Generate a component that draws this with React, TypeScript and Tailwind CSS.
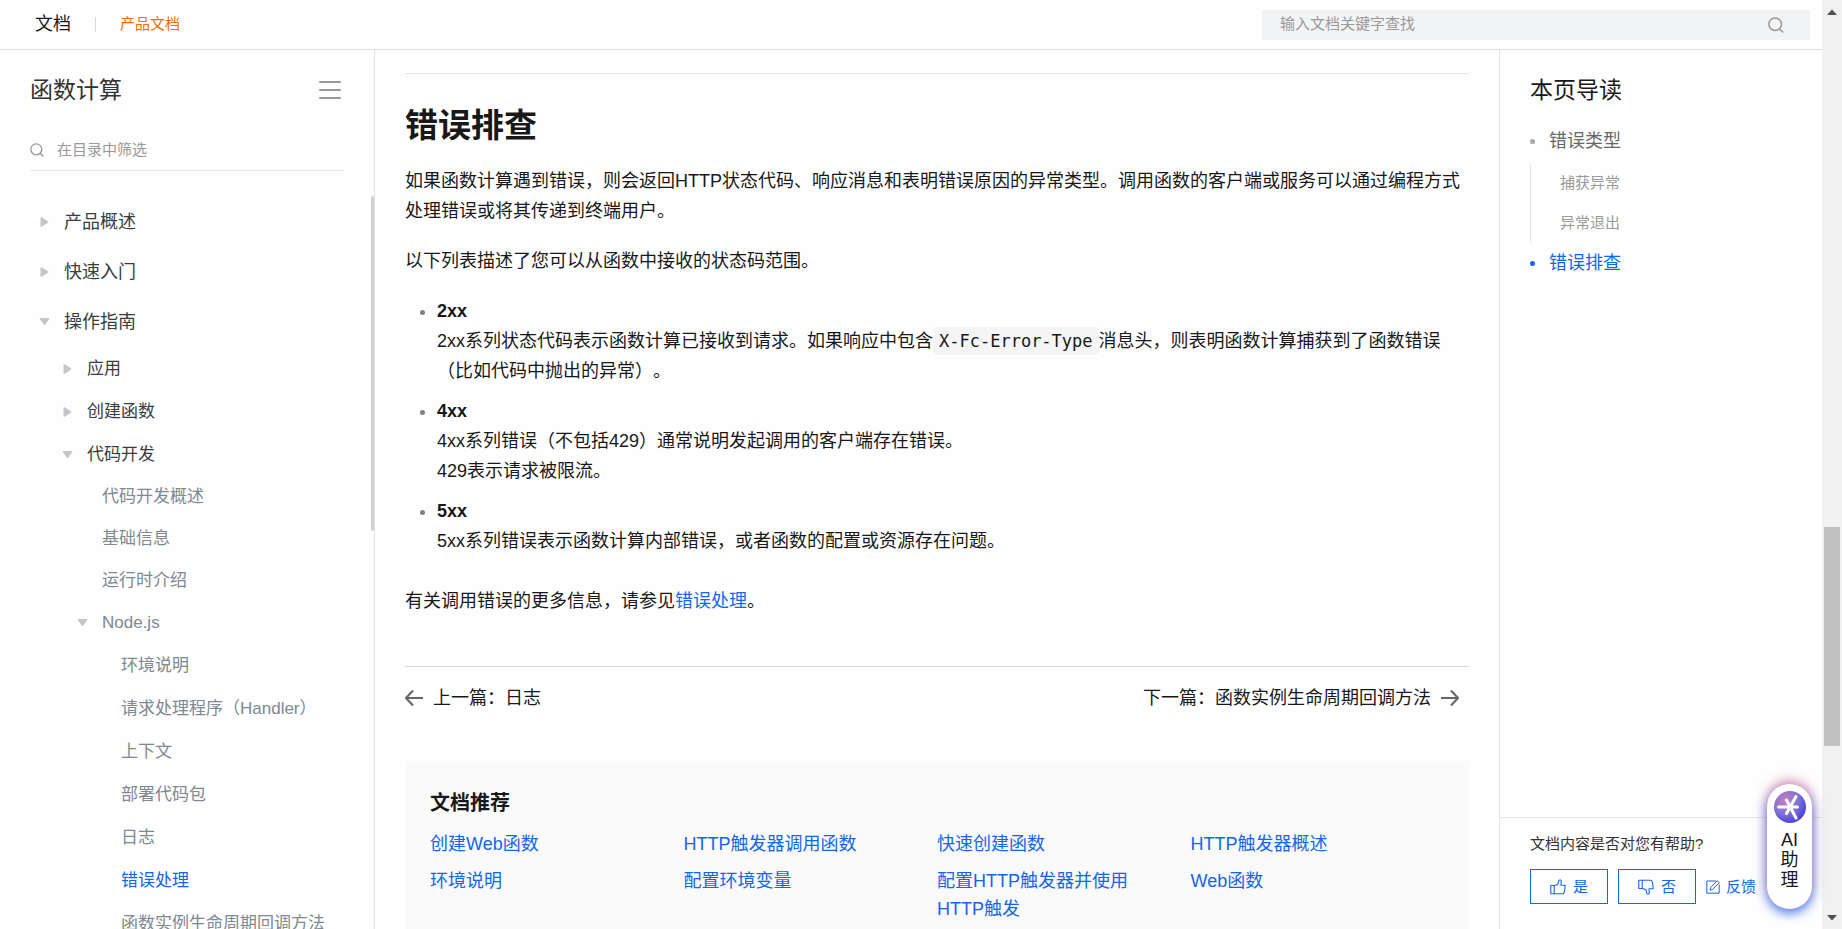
import type { ReactNode } from "react";

type TreeItem = {
  label: string;
  level: 1 | 2 | 3 | 4;
  state?: "open" | "closed";
  active?: boolean;
};

const tree: TreeItem[] = [
  { label: "产品概述", level: 1, state: "closed" },
  { label: "快速入门", level: 1, state: "closed" },
  { label: "操作指南", level: 1, state: "open" },
  { label: "应用", level: 2, state: "closed" },
  { label: "创建函数", level: 2, state: "closed" },
  { label: "代码开发", level: 2, state: "open" },
  { label: "代码开发概述", level: 3 },
  { label: "基础信息", level: 3 },
  { label: "运行时介绍", level: 3 },
  { label: "Node.js", level: 3, state: "open" },
  { label: "环境说明", level: 4 },
  { label: "请求处理程序（Handler）", level: 4 },
  { label: "上下文", level: 4 },
  { label: "部署代码包", level: 4 },
  { label: "日志", level: 4 },
  { label: "错误处理", level: 4, active: true },
  { label: "函数实例生命周期回调方法", level: 4 },
];

const levelStyles = {
  1: "h-[50px] pl-[38px] text-[18px] text-[#373d41]",
  2: "h-[43px] pl-[61px] text-[17px] text-[#373d41]",
  3: "h-[42px] pl-[76px] text-[17px] text-[#808890]",
  4: "h-[43px] pl-[95px] text-[17px] text-[#808890]",
};

const recommended = [
  "创建Web函数",
  "HTTP触发器调用函数",
  "快速创建函数",
  "HTTP触发器概述",
  "环境说明",
  "配置环境变量",
  "配置HTTP触发器并使用HTTP触发",
  "Web函数",
];

function SearchIcon({ className }: { className: string }) {
  return (
    <svg className={className} viewBox="0 0 16 16" fill="none" stroke="currentColor" strokeWidth="1.5">
      <circle cx="7.200" cy="7.200" r="6.300" />
      <path d="M11.500 11.700l3.600 3.800" />
    </svg>
  );
}

function Caret({ open }: { open: boolean }) {
  return (
    <svg className="h-3 w-3" viewBox="0 0 12 12" fill="#c4c6c9">
      {open ? (
        <path d="M2.500 2h8q1.200.2.500 1.300L7.500 8.200q-1 1-2 0L2 3.300q-.6-1.100.5-1.300z" />
      ) : (
        <path d="M2.500 2q.1-1.200 1.300-.7L9.800 5.200q1.100.8 0 1.600L3.800 10.700q-1.200.5-1.300-.7z" />
      )}
    </svg>
  );
}

function ThumbIcon({ down }: { down?: boolean }) {
  return (
    <svg
      className={down ? "h-4 w-4 rotate-180 -scale-x-100" : "h-4 w-4"}
      viewBox="0 0 16 16"
      fill="none"
      stroke="currentColor"
      strokeWidth="1.1"
      strokeLinejoin="round"
    >
      <path d="M.8 6.500h3.400v8.300H.8z" />
      <path d="M4.200 6.800 7.800 5.200 9 1.200q1.800-.8 2.300 1.200L11 6.300h4.200l-.7 6.200q-.3 2.300-2 2.300H4.200" />
    </svg>
  );
}

function EditIcon() {
  return (
    <svg className="h-[14px] w-[14px]" viewBox="0 0 14 14" fill="none" stroke="currentColor" strokeWidth="1">
      <path d="M10 1H.8v12.200h12.400V4.500" />
      <path d="M4 10.200l.6-2.700L11.300.8l2 1.900-6.700 6.800z" />
    </svg>
  );
}

function ArrowIcon({ right }: { right?: boolean }) {
  return (
    <svg
      className={right ? "h-[18px] w-[18px]" : "h-[18px] w-[18px] rotate-180"}
      viewBox="0 0 18 18"
      fill="none"
      stroke="#666"
      strokeWidth="2"
    >
      <path d="M0 9h16.500M10 1.500 17 9l-7 7.500" />
    </svg>
  );
}

function Header() {
  return (
    <header className="flex h-[50px] shrink-0 items-center border-b border-[#e0e0e0] pr-3 pl-[35px]">
      <a href="#" className="text-[18px] text-[#181818]">文档</a>
      <span className="ml-6 h-[15px] w-px bg-[#d8d8d8]" />
      <a href="#" className="ml-6 text-[15px] text-[#ff6a00]">产品文档</a>
      <label className="ml-auto flex h-[30px] w-[548px] items-center bg-[#f2f3f5] pr-[26px] pl-[18px] text-[#999]">
        <input
          type="search"
          aria-label="输入文档关键字查找"
          placeholder="输入文档关键字查找"
          className="min-w-0 flex-1 bg-transparent text-[15px] outline-none placeholder:text-[#999]"
        />
        <SearchIcon className="h-4 w-4" />
      </label>
    </header>
  );
}

function Sidebar() {
  return (
    <aside className="flex w-[375px] shrink-0 border-r border-[#e0e0e0]">
      <div className="flex min-w-0 flex-1 flex-col overflow-hidden">
        <div className="flex h-20 shrink-0 items-center justify-between px-[30px]">
          <h2 className="text-[23px] text-[#333]">函数计算</h2>
          <button type="button" aria-label="目录" className="flex w-[22px] flex-col gap-[6px]">
            <span className="h-[2px] rounded-full bg-[#999]" />
            <span className="h-[2px] rounded-full bg-[#999]" />
            <span className="h-[2px] rounded-full bg-[#999]" />
          </button>
        </div>
        <label className="mr-[27px] ml-[30px] flex h-[41px] shrink-0 items-center gap-[13px] border-b border-[#e5e5e5] text-[#999]">
          <SearchIcon className="h-[14px] w-[14px]" />
          <input
            type="search"
            aria-label="在目录中筛选"
            placeholder="在目录中筛选"
            className="min-w-0 flex-1 bg-transparent text-[15px] outline-none placeholder:text-[#999]"
          />
        </label>
        <nav className="mt-[26px]">
          {tree.map((item) => (
            <a key={item.label} href="#" className={`flex items-center whitespace-nowrap ${levelStyles[item.level]}`}>
              <span className="flex w-[26px] shrink-0">
                {item.state && <Caret open={item.state === "open"} />}
              </span>
              <span className={item.active ? "text-[#1366ec]" : ""}>{item.label}</span>
            </a>
          ))}
        </nav>
      </div>
      <div className="mt-[146px] h-[335px] w-[3px] rounded-full bg-[#d1d1d1]" />
    </aside>
  );
}

function StatusItem({ title, children }: { title: string; children: ReactNode }) {
  return (
    <li className="mb-[10px] flex">
      <span className="mt-[14px] mr-3 ml-[15px] h-[5px] w-[5px] shrink-0 rounded-full bg-[#808080]" />
      <div>
        <p className="font-bold">{title}</p>
        {children}
      </div>
    </li>
  );
}

function Article() {
  return (
    <main className="min-w-0 flex-1 overflow-hidden px-[30px] pt-[23px] text-[18px] leading-[30px] text-[#181818]">
      <div className="border-t border-[#e5e5e5] pt-[27px]">
        <h1 className="text-[33px] leading-[50px] font-bold">错误排查</h1>
        <p className="mt-[15px]">
          如果函数计算遇到错误，则会返回HTTP状态代码、响应消息和表明错误原因的异常类型。调用函数的客户端或服务可以通过编程方式处理错误或将其传递到终端用户。
        </p>
        <p className="mt-5">以下列表描述了您可以从函数中接收的状态码范围。</p>
        <ul className="mt-5">
          <StatusItem title="2xx">
            <p>
              2xx系列状态代码表示函数计算已接收到请求。如果响应中包含
              <code className="rounded bg-[#f5f5f5] px-[6px] py-1 font-['DejaVu_Sans_Mono',monospace] text-[17px]">
                X-Fc-Error-Type
              </code>
              消息头，则表明函数计算捕获到了函数错误（比如代码中抛出的异常）。
            </p>
          </StatusItem>
          <StatusItem title="4xx">
            <p>4xx系列错误（不包括429）通常说明发起调用的客户端存在错误。</p>
            <p>429表示请求被限流。</p>
          </StatusItem>
          <StatusItem title="5xx">
            <p>5xx系列错误表示函数计算内部错误，或者函数的配置或资源存在问题。</p>
          </StatusItem>
        </ul>
        <p className="mt-[30px]">
          有关调用错误的更多信息，请参见
          <a href="#" className="text-[#1366ec]">错误处理</a>。
        </p>
      </div>
      <div className="mt-[50px] flex justify-between border-t border-[#d8d8d8] pt-4 pr-[10px]">
        <a href="#" className="flex items-center gap-[10px]">
          <ArrowIcon />
          上一篇：日志
        </a>
        <a href="#" className="flex items-center gap-[10px]">
          下一篇：函数实例生命周期回调方法
          <ArrowIcon right />
        </a>
      </div>
      <section className="mt-12 bg-[#fafafa] px-[25px] pt-[27px] pb-10">
        <h2 className="text-[20px] font-bold">文档推荐</h2>
        <ul className="mt-3 grid grid-cols-4 gap-y-[9px] leading-7">
          {recommended.map((name) => (
            <li key={name} className="pr-6">
              <a href="#" className="text-[#1366ec]">{name}</a>
            </li>
          ))}
        </ul>
      </section>
    </main>
  );
}

function Toc() {
  return (
    <aside className="flex w-[323px] shrink-0 flex-col border-l border-[#e5e5e5]">
      <nav className="flex-1 pl-[30px]">
        <h2 className="flex h-[69px] items-center pt-3 text-[23px] text-[#181818]">本页导读</h2>
        <a href="#" className="flex h-11 items-center text-[18px] text-[#666]">
          <span className="mr-[14px] h-[5px] w-[5px] rounded-full bg-[#aaa]" />
          错误类型
        </a>
        <div className="border-l border-[#e5e5e5] pl-[29px] text-[15px] text-[#999]">
          <a href="#" className="flex h-10 items-center">捕获异常</a>
          <a href="#" className="flex h-10 items-center">异常退出</a>
        </div>
        <a href="#" className="flex h-10 items-center text-[18px] text-[#1366ec]">
          <span className="mr-[14px] h-[5px] w-[5px] rounded-full bg-[#1366ec]" />
          错误排查
        </a>
      </nav>
      <div className="h-[112px] border-t border-[#e5e5e5] pt-[14px] pl-[30px] text-[15px] leading-6">
        <p className="text-[#333]">文档内容是否对您有帮助?</p>
        <div className="mt-[13px] flex h-[35px] items-center gap-[10px] text-[#1366ec]">
          <button type="button" className="flex h-full w-[78px] items-center justify-center gap-[7px] border border-current">
            <ThumbIcon />是
          </button>
          <button type="button" className="flex h-full w-[78px] items-center justify-center gap-[7px] border border-current">
            <ThumbIcon down />否
          </button>
          <a href="#" className="flex items-center gap-[6px]">
            <EditIcon />反馈
          </a>
        </div>
      </div>
    </aside>
  );
}

function AssistantButton() {
  return (
    <button
      type="button"
      className="absolute right-[10px] bottom-5 flex h-[125px] w-[45px] flex-col items-center rounded-full bg-white pt-[7px] text-[18px] leading-5 text-[#181818] shadow-[0_-4px_12px_rgba(215,80,120,0.5),0_4px_12px_rgba(40,110,240,0.9)]"
    >
      <svg className="mb-[7px] h-8 w-8 shrink-0" viewBox="0 0 32 32">
        <defs>
          <radialGradient id="ai" cx="0.35" cy="0.3" r="0.75">
            <stop offset="0" stopColor="#c77fb8" />
            <stop offset="0.55" stopColor="#7f74d6" />
            <stop offset="1" stopColor="#4a3de0" />
          </radialGradient>
        </defs>
        <circle cx="16" cy="16" r="16" fill="url(#ai)" />
        <path
          d="M4.500 16H23.500M12.500 9l9.500 18M22 5.500 12.500 22.500"
          stroke="#fff"
          strokeWidth="3"
          strokeLinecap="round"
        />
      </svg>
      <span>AI</span>
      <span>助</span>
      <span>理</span>
    </button>
  );
}

function Scrollbar() {
  return (
    <div className="flex w-5 shrink-0 flex-col items-center bg-[#f1f1f1] pt-[9px] pb-2">
      <svg className="h-[6px] w-[10px]" viewBox="0 0 10 6" fill="#505050">
        <path d="M0 6l5-5.500L10 6z" />
      </svg>
      <div className="mt-[512px] h-[219px] w-4 bg-[#c1c1c1]" />
      <svg className="mt-auto h-[6px] w-[10px]" viewBox="0 0 10 6" fill="#505050">
        <path d="M0 0l5 5.500L10 0z" />
      </svg>
    </div>
  );
}

export default function App() {
  return (
    <div className="flex h-screen overflow-hidden bg-[#fefefe] font-['Liberation_Sans','Noto_Sans_CJK_SC',sans-serif] [text-spacing-trim:space-all]">
      <div className="relative flex min-w-0 flex-1 flex-col">
        <Header />
        <div className="flex min-h-0 flex-1">
          <Sidebar />
          <Article />
          <Toc />
        </div>
        <AssistantButton />
      </div>
      <Scrollbar />
    </div>
  );
}
